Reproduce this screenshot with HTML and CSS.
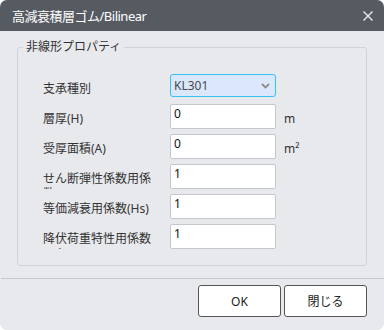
FILE: index.html
```html
<!DOCTYPE html>
<html lang="ja">
<head>
    <meta charset="UTF-8">
    <meta name="viewport" content="width=device-width, initial-scale=1.0">
    <title>高減衰積層ゴム/Bilinear</title>
    <link rel="stylesheet" href="styles.css">
</head>
<body>
    <div class="dialog">
        <div class="titlebar">
            <span class="title">高減衰積層ゴム/Bilinear</span>
            <svg class="close" width="10" height="10" viewBox="0 0 10 10">
                <path d="M0.5 0.5 L9.5 9.5 M9.5 0.5 L0.5 9.5" stroke="#f0f0f0" stroke-width="1.3" fill="none"/>
            </svg>
        </div>

        <!-- 非線形プロパティ -->
        <fieldset class="group">
            <legend>非線形プロパティ</legend>

            <div class="row">
                <label>支承種別</label>
                <div class="select">
                    <span>KL301</span>
                    <svg width="9" height="6" viewBox="0 0 9 6">
                        <path d="M1 1 L4.5 4.5 L8 1" stroke="#8c8c8c" stroke-width="1.8" fill="none"/>
                    </svg>
                </div>
            </div>
            <div class="row">
                <label>層厚(H)</label>
                <input type="text" value="0">
                <span class="unit">m</span>
            </div>
            <div class="row">
                <label>受厚面積(A)</label>
                <input type="text" value="0">
                <span class="unit">m²</span>
            </div>
            <div class="row">
                <label>せん断弾性係数用係数(Ks)</label>
                <input type="text" value="1">
            </div>
            <div class="row">
                <label>等価減衰用係数(Hs)</label>
                <input type="text" value="1">
            </div>
            <div class="row">
                <label>降伏荷重特性用係数(Kd)</label>
                <input type="text" value="1">
            </div>
        </fieldset>

        <div class="footer">
            <button type="button">OK</button>
            <button type="button">閉じる</button>
        </div>
    </div>
</body>
</html>
```

FILE: styles.css
```css
body {
    margin: 0;
    background-color: #ffffff;
    font-family: "Noto Sans", "Noto Sans CJK JP", sans-serif;
}
.dialog {
    width: 384px;
    height: 330px;
    background-color: #e8e9ed;
    border-radius: 7px;
    overflow: hidden;
}
.titlebar {
    height: 31px;
    background-color: #565b62;
    display: flex;
    align-items: center;
    justify-content: space-between;
    padding: 0 11px 0 12px;
    box-sizing: border-box;
}
.title {
    color: #ffffff;
    font-size: 13px;
    letter-spacing: -0.5px;
}
.group {
    margin: 9px 17px 0 17px;
    padding: 20px 0 16px 5px;
    border: 1px solid #d0d2d7;
    border-radius: 3px;
    min-width: 0;
}
.group legend {
    padding: 0 3px;
    font-size: 12px;
    line-height: 14px;
    color: #333333;
}
.row {
    display: flex;
    height: 25px;
    margin-bottom: 5px;
    padding-left: 20px;
}
.row:last-child {
    margin-bottom: 0;
}
.row label {
    width: 115px;
    margin-right: 12px;
    height: 25px;
    overflow: hidden;
    padding-top: 7px;
    box-sizing: border-box;
    font-size: 12px;
    line-height: 15px;
    color: #333333;
}
.row input {
    width: 106px;
    height: 25px;
    box-sizing: border-box;
    margin: 0;
    padding: 0 3px 6px 3px;
    border: 1px solid #c4c7cc;
    border-radius: 2px;
    background-color: #ffffff;
    font-family: "Noto Sans", sans-serif;
    font-size: 12px;
    color: #111111;
    outline: none;
}
.select {
    width: 106px;
    height: 23px;
    box-sizing: border-box;
    border: 1px solid #36c2f2;
    border-radius: 3px;
    background-color: #dbe7fb;
    display: flex;
    align-items: center;
    justify-content: space-between;
    padding: 0 5px 0 3px;
    font-size: 12px;
    color: #4a4a4a;
}
.unit {
    margin-left: 8px;
    padding-top: 7px;
    font-size: 12px;
    line-height: 15px;
    color: #333333;
}
.footer {
    margin: 12px 0 0 1px;
    border-top: 1px solid #c6c8cd;
    display: flex;
    justify-content: flex-end;
    gap: 3px;
    padding: 6px 17px 0 0;
}
.footer button {
    width: 83px;
    height: 32px;
    background-color: #ffffff;
    border: 1px solid #555555;
    border-radius: 3px;
    font-family: "Noto Sans", "Noto Sans CJK JP", sans-serif;
    font-size: 12px;
    color: #222222;
}
```
